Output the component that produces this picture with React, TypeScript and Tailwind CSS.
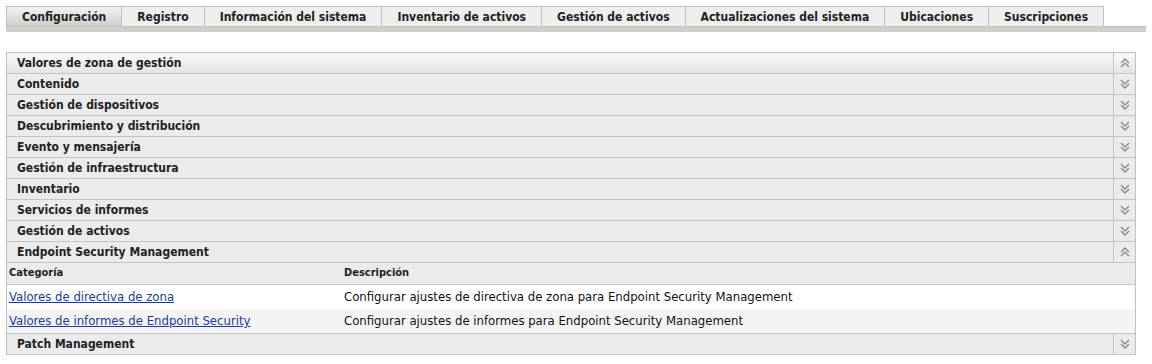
import React from 'react';

const tabs = [
  'Configuración',
  'Registro',
  'Información del sistema',
  'Inventario de activos',
  'Gestión de activos',
  'Actualizaciones del sistema',
  'Ubicaciones',
  'Suscripciones',
];

const sections = [
  'Contenido',
  'Gestión de dispositivos',
  'Descubrimiento y distribución',
  'Evento y mensajería',
  'Gestión de infraestructura',
  'Inventario',
  'Servicios de informes',
  'Gestión de activos',
];

const font = { fontFamily: '"DejaVu Sans Condensed", "DejaVu Sans", sans-serif' };

const Chevrons = ({ up }: { up: boolean }) => (
  <svg width="10" height="10" viewBox="0 0 10 10" className={up ? '' : 'rotate-180'}>
    <path d="M1 5 L5 1 L9 5" fill="none" stroke="#8a8a8a" strokeWidth="1.4" />
    <path d="M1 9 L5 5 L9 9" fill="none" stroke="#8a8a8a" strokeWidth="1.4" />
  </svg>
);

const SectionRow = ({ label, up, top }: { label: string; up?: boolean; top?: boolean }) => (
  <div
    className={`flex h-[21px] border-b border-[#c4c4c4] ${
      top ? 'bg-gradient-to-b from-[#fafafa] to-[#e4e4e4]' : 'bg-[#ebebeb]'
    }`}
  >
    <div className="flex-1 pl-[10px] flex items-center text-[12px] font-bold text-[#222]">{label}</div>
    <div className="w-[22px] border-l border-[#c4c4c4] flex items-center justify-center">
      <Chevrons up={!!up} />
    </div>
  </div>
);

export default function App() {
  return (
    <div className="bg-white w-[1152px] h-[364px] text-[#222]" style={font}>
      {/* Tabs */}
      <div className="pt-[6px] px-[6px]">
        <div className="flex h-[20px]">
          {tabs.map((t, i) => (
            <div
              key={t}
              className={`px-[15px] flex items-center text-[12px] font-bold border-t border-r border-[#c0c0c0] ${
                i === 0
                  ? 'border-l bg-gradient-to-b from-[#f2f2f2] to-[#cfcfcf]'
                  : 'bg-[#eeeeee]'
              }`}
            >
              {t}
            </div>
          ))}
        </div>
        <div className="h-[6px] w-[1140px] bg-[#d0d0c8] border-t border-[#c0c0c0]" />
      </div>

      {/* Panel */}
      <div className="mt-[20px] mx-[6px] w-[1130px] border-l border-r border-t border-[#c0c0c0]">
        <SectionRow label="Valores de zona de gestión" up top />
        {sections.map((s) => (
          <SectionRow key={s} label={s} />
        ))}
        <SectionRow label="Endpoint Security Management" up />

        <div className="flex h-[22px] items-center bg-[#ebebeb] border-b border-[#c4c4c4] text-[11px] font-bold">
          <div className="w-[337px] pl-[2px]">Categoría</div>
          <div>Descripción</div>
        </div>
        <div className="flex h-[24px] items-center bg-white text-[13px] text-[#111]">
          <div className="w-[337px] pl-[2px]">
            <a href="#" className="text-[#1a3aa0] underline">Valores de directiva de zona</a>
          </div>
          <div>Configurar ajustes de directiva de zona para Endpoint Security Management</div>
        </div>
        <div className="flex h-[25px] items-center bg-[#f4f4f4] border-b border-[#c4c4c4] text-[13px] text-[#111]">
          <div className="w-[337px] pl-[2px]">
            <a href="#" className="text-[#1a3aa0] underline">Valores de informes de Endpoint Security</a>
          </div>
          <div>Configurar ajustes de informes para Endpoint Security Management</div>
        </div>

        <SectionRow label="Patch Management" />
      </div>
    </div>
  );
}
